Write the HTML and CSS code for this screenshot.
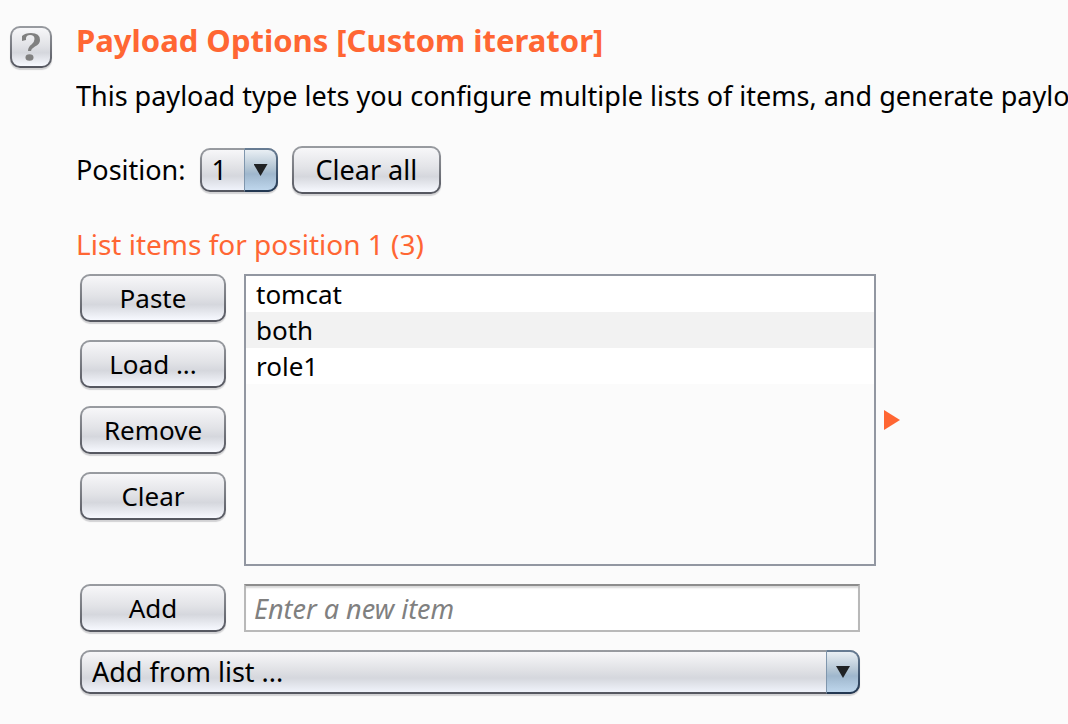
FILE: index.html
```html
<!DOCTYPE html>
<html lang="en">
<head>
<meta charset="utf-8">
<title>Payload Options</title>
<meta name="viewport" content="width=device-width, initial-scale=1">
<link rel="stylesheet" href="styles.css">
</head>
<body>
<main class="options">
  <button class="button help" type="button" aria-label="Help">
    <svg width="20" height="28" viewBox="0 0 20 28" aria-hidden="true">
      <path d="M1 8V3Q4 0 10 0Q19 0 19 7Q19 11 14 13.500Q10.500 15.500 10 18H7Q7 14 10.500 11.500Q13.500 9 13.500 6Q13.500 2 9 2Q5.500 2 5 5V7Z" fill="#808080"/>
      <ellipse cx="8.500" cy="24.500" rx="4" ry="3.200" fill="#808080"/>
    </svg>
  </button>
  <div class="content">
    <h1 class="title">Payload Options [Custom iterator]</h1>
    <p class="description">This payload type lets you configure multiple lists of items, and generate payloads</p>
    <div class="position">
      <label for="position">Position:</label>
      <span class="combo combo-small">
        <select id="position"><option>1</option></select>
        <span class="combo-arrow"></span>
      </span>
      <button class="button" type="button">Clear all</button>
    </div>
    <h2 class="subtitle" id="items-title">List items for position 1 (3)</h2>
    <div class="editor">
      <div class="actions">
        <button class="button" type="button">Paste</button>
        <button class="button" type="button">Load ...</button>
        <button class="button" type="button">Remove</button>
        <button class="button" type="button">Clear</button>
      </div>
      <div class="list-area">
        <ul class="items" aria-labelledby="items-title">
          <li>tomcat</li>
          <li>both</li>
          <li>role1</li>
        </ul>
        <svg class="marker" width="16" height="20" viewBox="0 0 16 20" aria-hidden="true"><path d="M0 0L16 10L0 20Z" fill="#ff6633"/></svg>
      </div>
      <button class="button" type="button">Add</button>
      <input class="new-item" type="text" placeholder="Enter a new item" aria-label="New item">
      <span class="combo combo-wide">
        <select aria-label="Add from list"><option>Add from list ...</option></select>
        <span class="combo-arrow"></span>
      </span>
    </div>
  </div>
</main>
</body>
</html>
```
FILE: styles.css
```css
* {
  box-sizing: border-box;
}

body {
  margin: 0;
  background: #fbfbfb;
  color: #000;
  font: 400 27px/36px "Noto Sans", "Open Sans", sans-serif;
}

button,
input,
select {
  font: inherit;
  color: inherit;
}

.options {
  display: flex;
  align-items: flex-start;
  gap: 24px;
  padding: 22px 0 24px 10px;
}

.content {
  flex: 1;
  min-width: 0;
}

.title,
.subtitle,
.description {
  margin: 0;
}

.title {
  color: #ff6633;
  font-size: 31px;
  font-weight: 700;
}

.description {
  margin-top: 20px;
  overflow: hidden;
  white-space: nowrap;
}

.subtitle {
  margin-top: 32px;
  color: #ff6633;
  font-size: 28px;
  font-weight: 400;
}

.button {
  height: 48px;
  padding: 0 22px;
  border: 2px solid transparent;
  border-radius: 10px;
  background:
    linear-gradient(#f7f7f9, #e2e3e7 45%, #d5d7dd 65%, #f7f9ff) padding-box,
    linear-gradient(#999ca1, #54565f) border-box;
  box-shadow: 0 2px 1px #d2d2d4;
  line-height: 36px;
}

.help {
  display: flex;
  flex: none;
  align-items: center;
  justify-content: center;
  width: 42px;
  height: 42px;
  margin-top: 4px;
  padding: 0;
}

.position {
  display: flex;
  align-items: center;
  gap: 14px;
  margin-top: 32px;
}

.combo {
  position: relative;
  display: block;
  height: 44px;
  border: 2px solid transparent;
  border-radius: 10px;
  background:
    linear-gradient(#f7f7f9, #e0e1e5 45%, #d5d7dd 65%, #f0f3fb) padding-box,
    linear-gradient(#999ca1, #54565f) border-box;
  box-shadow: 0 2px 1px #d2d2d4;
}

.combo select {
  display: block;
  width: 100%;
  height: 100%;
  padding: 0 34px 0 10px;
  border: 0;
  background: none;
  appearance: none;
}

.combo-small {
  width: 78px;
}

.combo-wide {
  grid-column: 1 / -1;
  margin-right: 40px;
}

.combo-arrow {
  position: absolute;
  inset: -2px -2px -2px auto;
  width: 34px;
  border: 2px solid transparent;
  border-left: 1px solid #7f96ad;
  border-radius: 0 10px 10px 0;
  background:
    linear-gradient(#e9eff4, #b3c5d4 45%, #9fb7cd 60%, #bed6ec) padding-box,
    linear-gradient(#687d94, #213650) border-box;
  pointer-events: none;
}

.combo-arrow::after {
  content: "";
  position: absolute;
  top: 14px;
  left: 9px;
  width: 14px;
  height: 12px;
  background: #202224;
  clip-path: polygon(0 0, 100% 0, 50% 100%);
}

.editor {
  display: grid;
  grid-template-columns: 146px minmax(0, 1fr);
  gap: 18px;
  max-width: 824px;
  margin-top: 12px;
  padding-left: 4px;
}

.actions {
  display: grid;
  align-content: start;
  gap: 18px;
}

.editor .button {
  padding: 0;
  font-size: 26px;
}

.list-area {
  display: flex;
  align-items: center;
  gap: 8px;
}

.items {
  flex: 1;
  min-height: 292px;
  margin: 0;
  padding: 0;
  border: 2px solid #9297a1;
  font-size: 26px;
  list-style: none;
}

.items li {
  padding-left: 10px;
  background: #fff;
}

.items li:nth-child(even) {
  background: #f2f2f2;
}

.marker {
  flex: none;
}

.new-item {
  min-width: 0;
  height: 48px;
  margin-right: 40px;
  padding: 0 8px;
  border: 2px solid #b9b9b9;
  border-top-color: #8d8d8d;
  border-radius: 0;
  background: #fff;
  box-shadow: inset 0 3px 2px -1px #d8d8d8;
}

.new-item::placeholder {
  color: #808080;
  font-style: italic;
  opacity: 1;
}
```
